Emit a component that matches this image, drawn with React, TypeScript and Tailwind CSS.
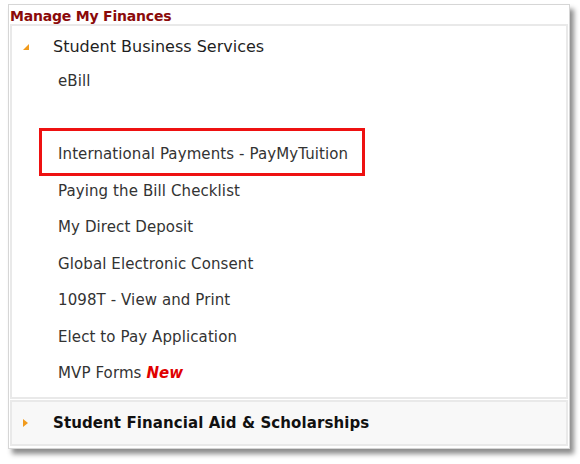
const items = [
  "eBill",
  "",
  "International Payments - PayMyTuition",
  "Paying the Bill Checklist",
  "My Direct Deposit",
  "Global Electronic Consent",
  "1098T - View and Print",
  "Elect to Pay Application",
];

export default function App() {
  return (
    <div className="w-[580px] h-[464px] bg-white pt-[4px] pl-[8px] font-['DejaVu_Sans',sans-serif]">
      <div className="w-[562px] h-[445px] bg-white border border-[#d6d6d6] shadow-[4px_5px_5px_rgba(0,0,0,0.45)] flex flex-col">
        <div className="h-[18px] pl-[1px] flex items-end text-[14px] leading-none font-bold text-[#8b0a0a] tracking-[-0.2px]">
          Manage My Finances
        </div>
        <div className="flex-1 mx-[1px] mb-[2px] mt-[1px] flex flex-col gap-[1px]">
          <div className="border-2 border-[#e9e9e9] h-[375px] flex flex-col">
            <div className="flex items-center h-[36px] pt-[6px]">
              <svg width="6" height="6" viewBox="0 0 6 6" className="ml-[11px] mr-[24px]">
                <polygon points="6,0 6,6 0,6" fill="#f19b1d" />
              </svg>
              <span className="text-[16px] text-[#1f1f1f]">Student Business Services</span>
            </div>
            <div className="flex flex-col pt-[1px]">
              {items.map((t, i) => (
                <div key={i} className="h-[36.5px] flex items-center relative">
                  {i === 2 && (
                    <div className="absolute left-[27px] top-[-8px] w-[326px] h-[48px] border-[3px] border-[#ee1111]" />
                  )}
                  <span className="pl-[46px] text-[15px] tracking-[0.1px] text-[#333]">{t}</span>
                </div>
              ))}
              <div className="h-[36.5px] flex items-center">
                <span className="pl-[46px] text-[15px] tracking-[0.1px] text-[#333]">
                  MVP Forms <span className="font-bold italic text-[#e00000]">New</span>
                </span>
              </div>
            </div>
          </div>
          <div className="flex-1 border-2 border-[#e9e9e9] bg-[#f8f8f8] flex items-center">
            <svg width="5" height="8" viewBox="0 0 5 8" className="ml-[11px] mr-[25px]">
              <polygon points="0,0 5,4 0,8" fill="#f19b1d" />
            </svg>
            <span className="text-[15px] font-bold tracking-[0.1px] text-[#111]">Student Financial Aid &amp; Scholarships</span>
          </div>
        </div>
      </div>
    </div>
  );
}
